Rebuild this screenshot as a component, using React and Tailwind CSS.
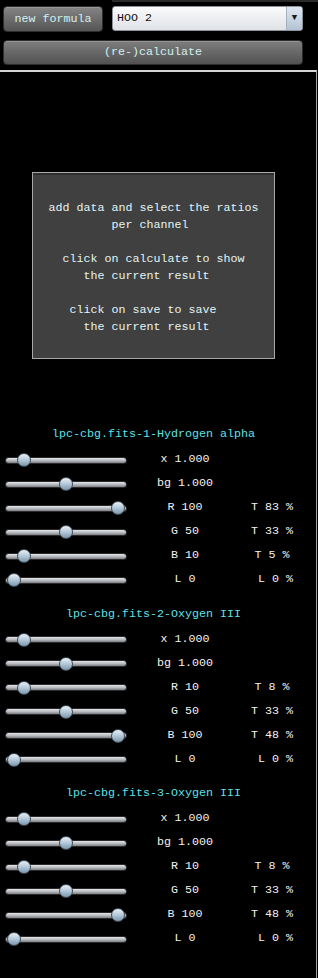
import { useState } from 'react';

const mono = { fontFamily: '"Liberation Mono", "Courier New", monospace' };

const sections = [
  {
    title: 'lpc-cbg.fits-1-Hydrogen alpha',
    rows: [
      { pct: 0.1, label: 'x 1.000' },
      { pct: 0.5, label: 'bg 1.000' },
      { pct: 1, label: 'R 100', right: 'T 83 %' },
      { pct: 0.5, label: 'G 50', right: 'T 33 %' },
      { pct: 0.1, label: 'B 10', right: 'T 5 %' },
      { pct: 0, label: 'L 0', right: 'L 0 %', shift: true },
    ],
  },
  {
    title: 'lpc-cbg.fits-2-Oxygen III',
    rows: [
      { pct: 0.1, label: 'x 1.000' },
      { pct: 0.5, label: 'bg 1.000' },
      { pct: 0.1, label: 'R 10', right: 'T 8 %' },
      { pct: 0.5, label: 'G 50', right: 'T 33 %' },
      { pct: 1, label: 'B 100', right: 'T 48 %' },
      { pct: 0, label: 'L 0', right: 'L 0 %', shift: true },
    ],
  },
  {
    title: 'lpc-cbg.fits-3-Oxygen III',
    rows: [
      { pct: 0.1, label: 'x 1.000' },
      { pct: 0.5, label: 'bg 1.000' },
      { pct: 0.1, label: 'R 10', right: 'T 8 %' },
      { pct: 0.5, label: 'G 50', right: 'T 33 %' },
      { pct: 1, label: 'B 100', right: 'T 48 %' },
      { pct: 0, label: 'L 0', right: 'L 0 %', shift: true },
    ],
  },
];

function Slider({ pct }) {
  return (
    <div className="relative w-[120px] h-[14px] flex items-center">
      <div className="w-full h-[5px] rounded-full bg-gradient-to-b from-[#e4e6e8] via-[#b8bbbf] to-[#7c8084] shadow-[0_0_0_1px_#2a2a2a]" />
      <div
        className="absolute top-0 w-[14px] h-[14px] rounded-full border border-[#3e4c58] bg-gradient-to-b from-[#e8f0f6] via-[#b4c8d8] to-[#7c97ad]"
        style={{ left: 1 + pct * 104 }}
      />
    </div>
  );
}

function Section({ title, rows }) {
  return (
    <div className="flex flex-col">
      <div className="h-[16px] leading-[16px] text-center text-[#5ee0ea]">{title}</div>
      <div className="mt-[6px] flex flex-col">
        {rows.map((r, i) => (
          <div key={i} className="h-[24px] flex items-center">
            <div className="w-[150px] pl-[6px]">
              <Slider pct={r.pct} />
            </div>
            <div className="w-[70px] text-center whitespace-pre text-[#f2f2f2]">{r.label}</div>
            <div className={`ml-[20px] w-[64px] text-center whitespace-pre text-[#f2f2f2] ${r.shift ? 'pl-[7px]' : ''}`}>{r.right || ''}</div>
          </div>
        ))}
      </div>
    </div>
  );
}

export default function App() {
  const [formula] = useState('HOO 2');

  return (
    <div className="w-[318px] min-h-[978px] bg-black flex flex-col text-[11.67px]" style={mono}>
      <div className="h-[2px] ml-[112px] bg-[#2a2a2a]" />
      <div className="flex items-start px-[3px] mt-[4px]">
        <button className="w-[100px] h-[26px] pt-[2px] rounded-[4px] border border-[#2e2e2e] bg-gradient-to-b from-[#858585] to-[#555555] text-[#d2f0f0] shadow-[inset_0_1px_0_#999]">
          new formula
        </button>
        <div className="ml-[9px] w-[191px] h-[25px] rounded-[3px] border border-[#8c9299] bg-gradient-to-b from-[#fbfbfc] to-[#dfe2e6] flex items-center overflow-hidden">
          <span className="flex-1 pl-[4px] text-[#111]">{formula}</span>
          <div className="w-[16px] h-full border-l border-[#a4b0bc] bg-gradient-to-b from-[#dfe8f1] to-[#b3c3d3] flex items-center justify-center text-[#1a1a1a] text-[9px]">
            ▼
          </div>
        </div>
      </div>
      <button className="mx-[3px] mt-[8px] w-[300px] h-[25px] pt-[1px] rounded-[4px] border border-[#2e2e2e] bg-gradient-to-b from-[#7e7e7e] to-[#525252] text-[#d2f0f0] shadow-[inset_0_1px_0_#959595]">
        (re-)calculate
      </button>
      <div className="mt-[5px] w-[317px] flex-1 border-t-2 border-t-[#d4d4d4] border-r border-r-[#a0a0a0]">
        <div className="w-[307px] flex flex-col">
          <div className="mt-[100px] mx-auto w-[243px] h-[187px] border border-[#a8a8a8] bg-[#404040] shadow-[inset_0_2px_0_#2e2e2e] pt-[27px] text-center text-[#e4f4f4] leading-[17px] whitespace-pre">
            <div>add data and select the ratios</div>
            <div>{'per channel '}</div>
            <div>&nbsp;</div>
            <div>click on calculate to show</div>
            <div>{'the current result  '}</div>
            <div>&nbsp;</div>
            <div>{'click on save to save   '}</div>
            <div>{'the current result  '}</div>
          </div>
          <div className="mt-[67px] flex flex-col gap-[13.5px]">
            {sections.map((s, i) => (
              <Section key={i} title={s.title} rows={s.rows} />
            ))}
          </div>
        </div>
      </div>
    </div>
  );
}
